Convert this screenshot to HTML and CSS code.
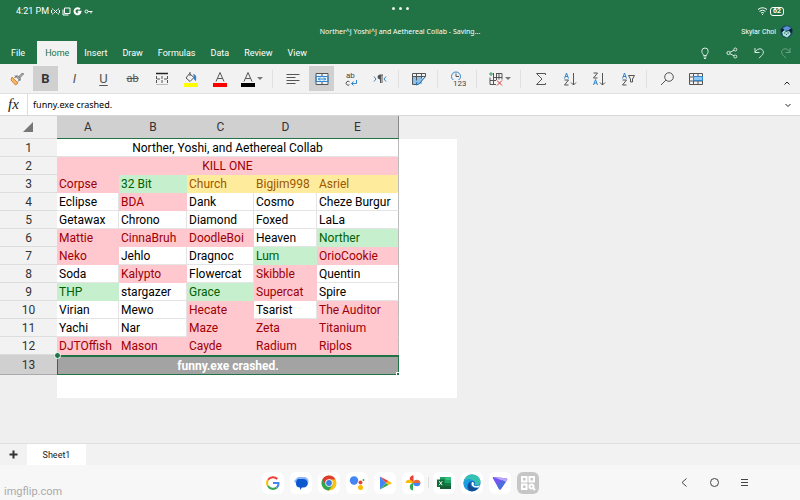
FILE: index.html
```html
<!DOCTYPE html>
<html lang="en">
<head>
<meta charset="utf-8">
<title>Norther, Yoshi, and Aethereal Collab</title>
<link rel="stylesheet" href="styles.css">
</head>
<body>
<header class="header">
  <div class="status">
    <div class="status-left">
      <span class="clock">4:21 PM</span>
      <svg width="9" height="9" viewBox="0 0 9 9"><path d="M1 2h1M1 7h1M7 2h1M7 7h1M.6 3v3M8.4 3v3M2.5 2.5l4 4M6.500 2.500l-4 4" /></svg>
      <svg width="9" height="9" viewBox="0 0 9 9"><path d="M2.500 1h5.500v5.500h-5.500zM1 2.500v5.500h5.500"/></svg>
      <svg class="bold" width="9" height="9" viewBox="0 0 9 9"><path d="M6.800 2.300A3 3 0 1 0 7.500 4.700H4.700"/></svg>
      <svg width="9" height="9" viewBox="0 0 9 9"><circle cx="2.500" cy="4.500" r="1.500"/><path d="M4 4.500h4.500M7 4.500v2"/></svg>
    </div>
    <div class="dots"><i></i><i></i><i></i></div>
    <div class="status-right">
      <svg width="11" height="10" viewBox="0 0 11 10"><path d="M1 3.500Q5.500 0 10 3.500M2.500 5.300Q5.500 3 8.500 5.300M4 7Q5.500 6 7 7M5.500 8v1"/></svg>
      <span class="battery">62</span>
    </div>
  </div>
  <div class="titlebar">
    <h1>Norther^J Yoshi^J and Aethereal Collab - Saving...</h1>
    <div class="user"><span>Skylar Choi</span>
      <svg width="13" height="13" viewBox="0 0 13 13"><circle cx="6.500" cy="6.500" r="6.300" fill="#1d4a63"/><path d="M3 3l4-2 4 2-2 2-4 1z" fill="#5b92d6"/><path d="M2 6l2-1 2 2 3-1 2 1-1 3-3 2.500-4-2z" fill="#a9e2d8"/><path d="M1 4l3 1-2 2zM9 5l3-1-1 4zM4 8h1.500M7.500 8H9M6 10l1-1" fill="#0b1f2b" stroke="#0b1f2b" stroke-width=".7"/></svg>
    </div>
  </div>
  <div class="tabbar">
    <nav class="tabs">
      <button class="tab file">File</button><button class="tab active">Home</button><button class="tab">Insert</button><button class="tab">Draw</button><button class="tab">Formulas</button><button class="tab">Data</button><button class="tab">Review</button><button class="tab">View</button>
    </nav>
    <div class="actions">
      <button aria-label="Tell me"><svg width="12" height="12" viewBox="0 0 12 12"><path d="M4.500 8.500C4.500 7 2.800 6.500 2.800 4.200a3.200 3.200 0 0 1 6.400 0C9.200 6.500 7.500 7 7.500 8.500zM4.500 10h3M5 11.500h2"/></svg></button>
      <button aria-label="Share"><svg width="12" height="12" viewBox="0 0 12 12"><circle cx="2.500" cy="6" r="1.600"/><circle cx="9.300" cy="2.500" r="1.500"/><circle cx="9.300" cy="9.500" r="1.500"/><path d="M4 5.300l4-2.100M4 6.700l4 2.100"/></svg></button>
      <button aria-label="Undo"><svg width="12" height="12" viewBox="0 0 12 12"><path d="M2 1v4.500h4.500M2 5.500C4 1.500 8 .8 9.700 3.200c1.500 2.200.3 4-1 5.300L6 11.200"/></svg></button>
      <button aria-label="Redo" disabled><svg width="12" height="12" viewBox="0 0 12 12"><path d="M10 1v4.500H5.500M10 5.500C8 1.500 4 .8 2.300 3.200c-1.500 2.200-.3 4 1 5.300L6 11.200"/></svg></button>
    </div>
  </div>
</header>

<div class="toolbar">
  <button aria-label="Format painter"><svg width="16" height="16" viewBox="0 0 16 16"><path d="M3 6l6 6-2.500 2L2 9z" fill="#f5b66a" stroke="#d9822b"/><path d="M6 4.500l5 5M5.500 7L8 4.500l3.500 3.500L9 10.500M9.500 6l4-4 1 1-4 4"/></svg></button>
  <button class="on letter b" aria-label="Bold">B</button>
  <button class="letter i" aria-label="Italic">I</button>
  <button class="letter u" aria-label="Underline">U</button>
  <button class="letter s" aria-label="Strikethrough">ab</button>
  <button aria-label="Borders"><svg width="16" height="16" viewBox="0 0 16 16"><path d="M2 2.500h12" stroke-width="1.500" stroke="#222"/><path d="M2.500 5v3M2.500 9v3M13.500 5v3M13.500 9v3M8 5v3M8 9v3M3 8h3M10 8h3"/><path d="M2 13.500h12" stroke="#bbb"/></svg></button>
  <button aria-label="Fill color"><svg width="16" height="16" viewBox="0 0 16 16"><path d="M6.500 2.500l4.500 4-4 4L3 7z M7 1v4"/><path d="M10.500 3.500c2.500.5 2.500 3 2 6L11 7.500" fill="#2f7cc4" stroke="#2f7cc4"/><path d="M1 12h14v4H1z" fill="#ffff00" stroke="none"/></svg></button>
  <button aria-label="Font color red"><svg width="16" height="16" viewBox="0 0 16 16"><path d="M4 10.500L8 1.500l4 9M5.500 7.500h5"/><path d="M1 12h14v4H1z" fill="#ff0000" stroke="none"/></svg></button>
  <button class="more" aria-label="Font color"><svg width="16" height="16" viewBox="0 0 16 16"><path d="M4 10.500L8 1.500l4 9M5.500 7.500h5"/><path d="M1 12h14v4H1z" fill="#000" stroke="none"/></svg><i class="caret"></i></button>
  <span class="sep"></span>
  <button aria-label="Alignment"><svg width="16" height="16" viewBox="0 0 16 16"><path d="M1.500 3.500h13M1.500 6.500h9M1.500 9.500h13M1.500 12.500h9"/></svg></button>
  <button class="on" aria-label="Merge cells"><svg width="16" height="16" viewBox="0 0 16 16"><path d="M2 2.500h12v11H2zM8 2.500v2.500M8 11v2.500" fill="#e8f2fa"/><path d="M2 5.500h12v5H2zM4 8h8M6 6.500L4.500 8 6 9.500M10 6.500L11.500 8 10 9.500" stroke="#2f86cf" fill="none"/></svg></button>
  <button aria-label="Wrap text"><svg width="16" height="18" viewBox="0 0 16 18"><text x="3" y="8" class="gl">ab</text><path d="M6.500 11.800a2 2 0 1 0 0 2.900"/><path d="M13.500 10v3.500H8.500M10.500 11.500l-2 2 2 2" stroke="#2f86cf"/></svg></button>
  <button aria-label="Text direction"><svg width="16" height="16" viewBox="0 0 16 16"><path d="M2 5.500l2 2.500-2 2.500M14 5.500L12 8l2 2.500" stroke="#2f86cf"/><path d="M8.500 4v8M10 4v8M8 4h3M8 4a2 2 0 0 0 0 4z" fill="#444"/></svg></button>
  <span class="sep"></span>
  <button aria-label="Cell styles"><svg width="16" height="16" viewBox="0 0 16 16"><path d="M2 6h9v7H2z" fill="#8bc0ea" stroke="none"/><path d="M1.500 2.500h13v3M1.500 2.500v11h5M1.500 5.500h13M5.500 2.500v7M10.500 2.500v5"/><path d="M14.500 5.500L8 13l-3 1 1-3" fill="#8bc0ea" stroke="#2368a0"/></svg></button>
  <span class="sep"></span>
  <button aria-label="Number format"><svg width="16" height="16" viewBox="0 0 16 16"><circle cx="6" cy="5.500" r="4.500" stroke="#2f86cf"/><path d="M6 2.500v3h3" /><path d="M3 9h13v7H3z" fill="#f2f2f2" stroke="none"/><text x="3" y="15" class="gl">123</text></svg></button>
  <span class="sep"></span>
  <button class="more" aria-label="Insert and delete cells"><svg width="16" height="16" viewBox="0 0 16 16"><path d="M2 6.500v7h6M2 9.500h6M5.500 2v11.500M8.500 3v6M5 6.500h9M8 2.500h6v6M11 2.500v6"/><path d="M1 3h4M3 1v4" stroke="#3a9b63"/><path d="M9 9.500l5 5M14 9.500l-5 5" stroke="#d13b3b"/></svg><i class="caret"></i></button>
  <span class="sep"></span>
  <button aria-label="AutoSum"><svg width="16" height="16" viewBox="0 0 16 16"><path d="M12.500 4V2.500h-9L9 8l-5.500 5.500h9V12"/></svg></button>
  <button aria-label="Sort ascending"><svg width="16" height="16" viewBox="0 0 16 16"><path d="M2.500 7.500L4.500 2l2 5.500M3 5.500h3" stroke="#2f86cf"/><path d="M2.500 9h4L2.500 14h4M11.500 2v12M9 11.500l2.500 2.500 2.500-2.500"/></svg></button>
  <button aria-label="Sort descending"><svg width="16" height="16" viewBox="0 0 16 16"><path d="M2.500 14L4.500 8.500l2 5.500M3 12h3" stroke="#2f86cf"/><path d="M2.500 2h4L2.500 7h4M11.500 2v12M9 11.500l2.500 2.500 2.500-2.500"/></svg></button>
  <button aria-label="Filter"><svg width="16" height="16" viewBox="0 0 16 16"><path d="M2.500 7.500L4.500 2l2 5.500M3 5.500h3" stroke="#2f86cf"/><path d="M2.500 9h4L2.500 14h4M8.500 4.500h6L12.500 8v3h-2V8z"/></svg></button>
  <span class="sep"></span>
  <button aria-label="Find"><svg width="16" height="16" viewBox="0 0 16 16"><circle cx="10" cy="6" r="4.300"/><path d="M6.900 9.100L2 14"/></svg></button>
  <button aria-label="Format as table"><svg width="16" height="16" viewBox="0 0 16 16"><path d="M1.500 2.500h13v11h-13zM1.500 6h13M1.500 10h13M5.500 2.500v11M10 2.500V6M10 10v3.500"/><path d="M5.500 5.500h9v4h-9z" fill="#8bc8f4" stroke="#2f86cf"/></svg></button>
  <button class="collapse" aria-label="Collapse ribbon"><svg width="8" height="8" viewBox="0 0 8 8"><path d="M1.500 5.500L4 3l2.500 2.500"/></svg></button>
</div>

<div class="formula">
  <label for="fx">fx</label>
  <input id="fx" type="text" value="funny.exe crashed.">
  <button aria-label="Expand formula bar"><svg width="8" height="8" viewBox="0 0 8 8"><path d="M1.500 3L4 5.500 6.500 3"/></svg></button>
</div>

<main class="grid">
  <table>
    <colgroup><col class="c0"><col class="ca"><col class="cb"><col class="cc"><col class="cd"><col class="ce"><col class="cf"></colgroup>
    <thead><tr><th class="corner"><svg width="10" height="10" viewBox="0 0 10 10"><path d="M10 0v10H0z"/></svg></th><th>A</th><th>B</th><th>C</th><th>D</th><th class="edge">E</th><td class="blank"></td></tr></thead>
    <tbody>
    <tr><th>1</th><td colspan="5" class="mid edge">Norther, Yoshi, and Aethereal Collab</td><td></td></tr>
    <tr><th>2</th><td colspan="5" class="mid bad edge">KILL ONE</td><td></td></tr>
    <tr><th>3</th><td class="bad">Corpse</td><td class="good">32 Bit</td><td class="warn">Church</td><td class="warn">Bigjim998</td><td class="warn edge">Asriel</td><td></td></tr>
    <tr><th>4</th><td>Eclipse</td><td class="bad">BDA</td><td>Dank</td><td>Cosmo</td><td class="edge">Cheze Burgur</td><td></td></tr>
    <tr><th>5</th><td>Getawax</td><td>Chrono</td><td>Diamond</td><td>Foxed</td><td class="edge">LaLa</td><td></td></tr>
    <tr><th>6</th><td class="bad">Mattie</td><td class="bad">CinnaBruh</td><td class="bad">DoodleBoi</td><td>Heaven</td><td class="good edge">Norther</td><td></td></tr>
    <tr><th>7</th><td class="bad">Neko</td><td>Jehlo</td><td>Dragnoc</td><td class="good">Lum</td><td class="bad edge">OrioCookie</td><td></td></tr>
    <tr><th>8</th><td>Soda</td><td class="bad">Kalypto</td><td>Flowercat</td><td class="bad">Skibble</td><td class="edge">Quentin</td><td></td></tr>
    <tr><th>9</th><td class="good">THP</td><td>stargazer</td><td class="good">Grace</td><td class="bad">Supercat</td><td class="edge">Spire</td><td></td></tr>
    <tr><th>10</th><td>Virian</td><td>Mewo</td><td class="bad">Hecate</td><td>Tsarist</td><td class="bad edge">The Auditor</td><td></td></tr>
    <tr><th>11</th><td>Yachi</td><td>Nar</td><td class="bad">Maze</td><td class="bad">Zeta</td><td class="bad edge">Titanium</td><td></td></tr>
    <tr><th>12</th><td class="bad">DJTOffish</td><td class="bad">Mason</td><td class="bad">Cayde</td><td class="bad">Radium</td><td class="bad edge">Riplos</td><td></td></tr>
    <tr class="current"><th>13</th><td colspan="5" class="mid selected">funny.exe crashed.<i class="handle"></i><i class="fillcorner"></i></td><td></td></tr>
    <tr class="tail"><td class="blank"></td><td colspan="6"></td></tr>
    </tbody>
  </table>
</main>

<div class="sheets"><button class="add" aria-label="Add sheet"><svg width="9" height="9" viewBox="0 0 9 9"><path d="M4.500 .5v8M.5 4.500h8"/></svg></button><button class="sheet">Sheet1</button></div>

<footer class="dock">
  <div class="apps">
    <a href="#" aria-label="Google"><svg width="16" height="16" viewBox="0 0 16 16" class="g"><path d="M12.300 4A6 6 0 0 0 3 4.800" stroke="#ea4335"/><path d="M3 4.800a6 6 0 0 0 0 6.200" stroke="#fbbc05"/><path d="M3 11a6 6 0 0 0 8.800 1.600" stroke="#34a853"/><path d="M11.800 12.600A5.500 5.500 0 0 0 13.500 8H8" stroke="#4285f4"/></svg></a>
    <a href="#" aria-label="Messages"><svg width="16" height="16" viewBox="0 0 16 16"><path d="M5 2h6a4 4 0 0 1 0 9H8l-4-1-3-4z" fill="#8db5f8"/><path d="M6 4h4.500a4 4 0 0 1 0 8.500H9L7 15v-2.500a4 4 0 0 1-4-4C3 6 4 4 6 4z" fill="#0b57d0"/></svg></a>
    <a href="#" aria-label="Chrome"><svg width="16" height="16" viewBox="0 0 16 16"><circle cx="8" cy="8" r="7.500" fill="#fbc116"/><path d="M8 8L1.500 4.300A7.500 7.500 0 0 0 8 15.500l3.500-5.500z" fill="#31a650"/><path d="M8 8L4.500 9.500 1.500 4.200A7.500 7.500 0 0 1 14.500 4.500H8z" fill="#df3d31"/><circle cx="8" cy="8" r="3.700" fill="#fff"/><circle cx="8" cy="8" r="2.900" fill="#3c7de6"/></svg></a>
    <a href="#" aria-label="Assistant"><svg width="16" height="16" viewBox="0 0 16 16"><circle cx="5" cy="5.500" r="4.200" fill="#4285f4"/><circle cx="11.500" cy="7.500" r="2" fill="#ea4335"/><circle cx="11.500" cy="12.500" r="2.500" fill="#fbbc05"/><circle cx="14.500" cy="5" r="1" fill="#34a853"/></svg></a>
    <a href="#" aria-label="Play Store"><svg width="16" height="16" viewBox="0 0 16 16"><path d="M3 1.500v13L9 8z" fill="#4285f4"/><path d="M3 1.500L11.500 6 9 8z" fill="#ea4335"/><path d="M3 14.500l8.500-4.500L9 8z" fill="#34a853"/><path d="M11.500 6l3.500 2-3.500 2L9 8z" fill="#fbbc05"/></svg></a>
    <a href="#" aria-label="Photos"><svg width="16" height="16" viewBox="0 0 16 16"><path d="M8 8V.5a3.800 3.800 0 0 0 0 7.500z" fill="#ea4335"/><path d="M8.500 8V.5A3.800 3.800 0 0 0 5 4.300c0 2 1.500 3.700 3.500 3.700z" fill="#ea4335"/><path d="M8 8h7.500A3.800 3.800 0 0 0 8 8z" fill="#ea6a35"/><path d="M8 8h7.500a3.800 3.800 0 0 1-7.500 0z" fill="#4285f4"/><path d="M8 8v7.500A3.800 3.800 0 0 1 8 8z" fill="#34a853"/><path d="M8 8H.5A3.800 3.800 0 0 1 8 8z" fill="#fbbc05"/></svg></a>
    <span class="rule"></span>
    <a href="#" aria-label="Excel"><svg width="16" height="16" viewBox="0 0 16 16"><path d="M4 2h11v12H4z" fill="#21a366"/><path d="M4 8h11v6H4z" fill="#107c41"/><path d="M9.500 2H15v3H9.500z" fill="#33c481"/><path d="M4 11h11v3H4z" fill="#185c37"/><path d="M1 4.500h7.500v7.500H1z" fill="#0f6b38"/><path d="M3.200 6.200l3 4M6.200 6.200l-3 4" stroke="#fff"/></svg></a>
    <a href="#" aria-label="Edge"><svg width="18" height="18" viewBox="0 0 18 18"><circle cx="9" cy="9" r="8.500" fill="#1675c9"/><path d="M.8 8C1.500 3 5 .5 9 .5c5 0 8.500 3.500 8.500 7.200 0 3-3 4.500-6 3.300 1.500-2 .5-4.500-3-4.500C5 6.500 2 7 .8 8z" fill="#35c1b1"/><path d="M.8 8C3 4 8 4.500 9.500 6.500 6 6.500 4 10 6 16.500 2 15.500 0 12 .8 8z" fill="#1b9de2"/><path d="M8 8c-2.500 4 2 7 7.500 5.500-2 3-6 4.500-9 3.200C3.500 14 4 9 8 8z" fill="#134b93"/><path d="M9 8c2 0 2.500 1.500 1.500 3 2 2 5 1 6.500 0l-1 2.200c-4 1.300-9-1-7-5.200z" fill="#fff"/></svg></a>
    <a href="#" aria-label="Proton VPN"><svg width="16" height="16" viewBox="0 0 16 16"><path d="M1.500 2L14 3.200c1.300.2 1.500 1.300 1 2L9 14c-.6.800-1.500.700-2 0L1 3.500C.6 2.600.8 2 1.500 2z" fill="#7257f5"/><path d="M1.500 2L14 3.200c1.300.2 1.500 1.300 1 2L13.500 7z" fill="#b8a5ff"/><path d="M5 10l5-5 3.500 2L9 14c-.6.800-1.500.700-2 0z" fill="#4b6edb"/></svg></a>
    <a href="#" class="scan" aria-label="App library"><svg width="16" height="16" viewBox="0 0 16 16"><path d="M2 2h4.500v4.500H2zM9.500 2H14v4.500H9.500zM2 9.500h4.500V14H2z"/><circle cx="11.500" cy="11.500" r="2"/><path d="M13 13l2 2"/></svg></a>
  </div>
  <nav class="nav">
    <button aria-label="Back"><svg width="11" height="11" viewBox="0 0 11 11"><path d="M7.500 1.500l-4.500 4 4.500 4"/></svg></button>
    <button aria-label="Home"><svg width="11" height="11" viewBox="0 0 11 11"><circle cx="5.500" cy="5.500" r="4"/></svg></button>
    <button aria-label="Recents"><svg width="11" height="11" viewBox="0 0 11 11"><path d="M2 2.500h7M2 5.500h7M2 8.500h7"/></svg></button>
  </nav>
  <span class="watermark">imgflip.com</span>
</footer>
</body>
</html>
```
FILE: styles.css
```css
* { box-sizing: border-box; }
body {
  margin: 0;
  min-height: 100vh;
  display: flex;
  flex-direction: column;
  background: #efefef;
  font-family: Roboto, "Liberation Sans", sans-serif;
  font-size: 9px;
  color: #222;
}
button { border: 0; padding: 0; background: none; font: inherit; color: inherit; display: flex; align-items: center; justify-content: center; }
svg { display: block; flex: none; fill: none; stroke: currentColor; }

.header { background: #217346; color: #fff; }
.status { display: grid; grid-template-columns: 1fr auto 1fr; align-items: center; height: 22px; padding: 0 16px; }
.status-left, .status-right { display: flex; align-items: center; gap: 2px; }
.status-left svg { stroke-width: 1; }
.status-left .bold { stroke-width: 2; }
.status-right { justify-content: flex-end; }
.dots { display: flex; gap: 4px; align-self: start; padding-top: 7px; }
.dots i { width: 3px; height: 3px; border-radius: 50%; background: #e8f3ec; }
.battery { border: 1px solid #fff; border-radius: 3px; width: 14px; height: 9px; font-size: 7px; line-height: 7px; font-weight: 700; text-align: center; }
.titlebar { display: grid; grid-template-columns: 1fr auto 1fr; align-items: center; height: 19px; padding: 0 7px; font-size: 7px; }
.titlebar h1 { grid-column: 2; margin: 0; font-family: "Noto Sans", sans-serif; font-size: 7px; font-weight: 400; }
.user { display: flex; justify-content: flex-end; align-items: center; gap: 4px; }
.user svg { stroke: none; }
.tabbar { display: flex; justify-content: space-between; align-items: stretch; height: 23px; padding: 0 8px 0 3px; }
.tabs, .actions { display: flex; }
.tab { padding: 0 8px 0 7px; }
.tab.file { padding-left: 8px; margin-right: 4px; }
.tab.active { padding-left: 8px; background: #f2f2f2; color: #217346; }
.actions { gap: 15px; }
.actions button:disabled { opacity: .4; }
.actions svg { stroke-width: 1; opacity: .85; }

.toolbar { display: flex; align-items: center; gap: 4px; height: 30px; padding: 0 4px; background: #f2f2f2; border-bottom: 1px solid #e0e0e0; color: #555; }
.toolbar button { width: 25px; height: 25px; }
.toolbar .on { background: #d0d0d0; }
.toolbar .more { width: 30px; padding-left: 4px; justify-content: flex-start; gap: 1px; }
.caret { border: 3px solid transparent; border-top-color: #777; border-bottom: 0; }
.sep { width: 1px; height: 18px; margin: 0 3px 0 2px; background: #e0e0e0; }
.letter { font-size: 13px; }
.letter.b { font-weight: 700; color: #333; }
.letter.i { font-style: italic; }
.letter.u { text-decoration: underline; text-underline-offset: 2px; }
.letter.s { font-size: 11px; text-decoration: line-through; }
.gl { font-size: 8px; fill: #444; stroke: none; }
.toolbar .collapse { width: 10px; height: 8px; margin: 8px 4px 0 auto; color: #222; }

.formula { display: flex; align-items: stretch; height: 21px; background: #fff; }
.formula label { width: 28px; border-right: 1px solid #ddd; text-align: center; font: italic 15px/20px "Liberation Serif", serif; }
.formula input { flex: 1; min-width: 0; border: 0; outline: 0; padding: 0 5px; font: 9px "Noto Sans", sans-serif; color: #000; background: none; }
.formula button { width: 24px; }

.grid { flex: 1; border-top: 1px solid #d8d8d8; overflow: hidden; }
table { border-collapse: separate; border-spacing: 0; table-layout: fixed; width: 457px; font-size: 12px; line-height: 16px; color: #000; }
.c0 { width: 57px; }
.ca { width: 62px; }
.cb { width: 68px; }
.cc { width: 67px; }
.cd { width: 63px; }
.ce { width: 82px; }
.cf { width: 58px; }
th { padding: 0; font-weight: 400; color: #333; background: #f2f2f2; border-bottom: 1px solid #ddd; }
thead th { height: 23px; background: #d0d0d0; border-bottom: 1px solid #217346; }
thead .corner { background: #f2f2f2; border-bottom-color: #ddd; }
.corner svg { margin-left: 23px; fill: #777; stroke: none; }
td { height: 18px; padding: 1px 2px 0; background: #fff; white-space: nowrap; }
tbody td:not(:last-child) { border: 0 solid #e4e4e4; border-width: 0 1px 1px 0; }
tbody th { height: 18px; padding-top: 1px; line-height: 16px; }
.mid { text-align: center; }
tbody td.bad, tbody td.good, tbody td.warn { border-color: transparent; }
.edge, tbody td.edge:not(:last-child) { border-right: 1px solid #bbb; }
thead .edge { border-right-color: #888; }
.bad { background: #ffc7ce; color: #9c0006; }
.good { background: #c6efce; color: #006100; }
.warn { background: #ffeb9c; color: #9c5700; }
tbody .blank:not(:last-child), .blank { background: #efefef; border: 0; }
.current th { height: 20px; background: #d0d0d0; border-bottom-color: #aaa; }
.current td.selected:not(:last-child) { position: relative; padding: 0; background: #a3a3a3; color: #fff; font-weight: 700; border: 1px solid #217346; border-top-width: 2px; }
.handle { position: absolute; left: -4px; top: -5px; width: 7px; height: 7px; border-radius: 50%; background: #217346; border: 1px solid #fff; }
.fillcorner { position: absolute; right: -1px; bottom: -1px; width: 3px; height: 3px; border-top: 1px solid #fff; border-left: 1px solid #fff; background: #217346; }
.tail td { height: 23px; }

.sheets { display: flex; height: 22px; background: #f2f2f2; border-top: 1px solid #e0e0e0; }
.add { width: 27px; color: #333; }
.add svg { stroke-width: 2; }
.sheet { width: 59px; background: #fff; }

.dock { position: relative; display: grid; grid-template-columns: 1fr auto 1fr; align-items: center; height: 35px; background: #f7f7f7; }
.apps { grid-column: 2; display: flex; align-items: center; gap: 6px; }
.apps a { width: 22px; height: 22px; display: flex; align-items: center; justify-content: center; border-radius: 6px; background: #fff; }
.apps svg { stroke: none; }
.apps .g path { stroke-width: 2; }
.rule { width: 1px; height: 11px; margin: 0 -2px; background: #ddd; }
.apps .scan { background: #c6c6c6; }
.scan svg { stroke: #fff; stroke-width: 2; }
.nav { display: flex; justify-content: flex-end; gap: 19px; padding-right: 50px; color: #444; }
.watermark { position: absolute; left: 4px; bottom: 2px; font-size: 11px; color: #aaa; }
```
